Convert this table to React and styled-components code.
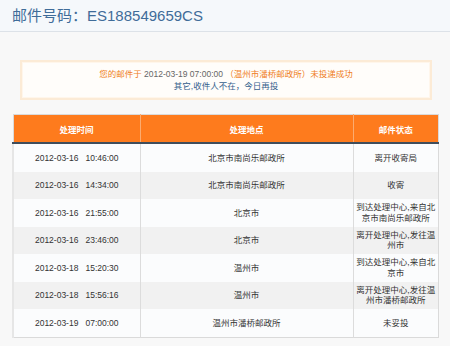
import React from 'react'
import styled, { createGlobalStyle } from 'styled-components'

const GlobalStyle = createGlobalStyle`
  html, body {
    margin: 0;
    padding: 0;
    background: #f8f8f8;
    font-family: "Liberation Sans", "Noto Sans CJK SC", sans-serif;
  }
`

const rows = [
  ['2012-03-16   10:46:00', '北京市南尚乐邮政所', '离开收寄局'],
  ['2012-03-16   14:34:00', '北京市南尚乐邮政所', '收寄'],
  ['2012-03-16   21:55:00', '北京市', '到达处理中心,来自北京市南尚乐邮政所'],
  ['2012-03-16   23:46:00', '北京市', '离开处理中心,发往温州市'],
  ['2012-03-18   15:20:30', '温州市', '到达处理中心,来自北京市'],
  ['2012-03-18   15:56:16', '温州市', '离开处理中心,发往温州市潘桥邮政所'],
  ['2012-03-19   07:00:00', '温州市潘桥邮政所', '未妥投'],
]

function App() {
  return (
    <Page>
      <GlobalStyle />
      <TitleBar>
        <h1>邮件号码：ES188549659CS</h1>
      </TitleBar>
      <Notice>
        <p className="warn">
          您的邮件于 <span className="date">2012-03-19 07:00:00</span> （温州市潘桥邮政所）未投递成功
        </p>
        <p className="reason">其它,收件人不在，今日再投</p>
      </Notice>
      <Track>
        <colgroup>
          <col style={{ width: 127 }} />
          <col style={{ width: 213 }} />
          <col />
        </colgroup>
        <thead>
          <tr>
            <th>处理时间</th>
            <th>处理地点</th>
            <th>邮件状态</th>
          </tr>
        </thead>
        <tbody>
          {rows.map((r, i) => (
            <Row key={i} $odd={i % 2 === 1}>
              <td className="time">{r[0]}</td>
              <td>{r[1]}</td>
              <td className="status">{r[2]}</td>
            </Row>
          ))}
        </tbody>
      </Track>
    </Page>
  )
}

const Page = styled.div`
  width: 450px;
  height: 346px;
  overflow: hidden;
  background: #f8f8f8;
`

const TitleBar = styled.div`
  height: 31px;
  background: #f5f8fb;
  border-bottom: 1px solid #dde2e8;
  padding-left: 12px;
  display: flex;
  align-items: center;

  h1 {
    margin: 0;
    margin-top: -3px;
    font-size: 15px;
    font-weight: normal;
    color: #3f6c99;
  }
`

const Notice = styled.div`
  margin: 28px 18px 0 20px;
  height: 36px;
  border: 2px solid #fcebd6;
  box-shadow: inset 0 0 0 1px #fff6eb;
  background: #fffdfa;
  display: flex;
  flex-direction: column;
  justify-content: center;
  align-items: center;

  p {
    margin: 0;
    font-size: 8.5px;
    line-height: 12px;
  }

  .warn {
    color: #ef7d24;
  }

  .date {
    color: #666;
  }

  .reason {
    color: #35608c;
  }
`

const Track = styled.table`
  margin: 14px 0 0 12px;
  width: 427px;
  border-collapse: collapse;
  table-layout: fixed;
  font-size: 8.5px;
  color: #333;
  border: 1px solid #dadada;

  th {
    height: 27px;
    background: #fe7b1d;
    color: #fff;
    font-weight: bold;
    border-bottom: 2px solid #3f4d5c;
    border-left: 1px solid #fbab70;
    padding: 0;
  }

  th:first-child {
    border-left: none;
  }

  td {
    height: 27.5px;
    padding: 0 3px;
    text-align: center;
    border-left: 1px solid #dcdcdc;
    line-height: 10.5px;
  }

  td.time {
    white-space: pre;
    border-left: 2px solid #e6e6e6;
  }

  td.status {
    padding: 0 1px;
  }
`

const Row = styled.tr`
  background: ${(p) => (p.$odd ? '#f1f1f1' : '#fbfcfd')};
`

export default App
